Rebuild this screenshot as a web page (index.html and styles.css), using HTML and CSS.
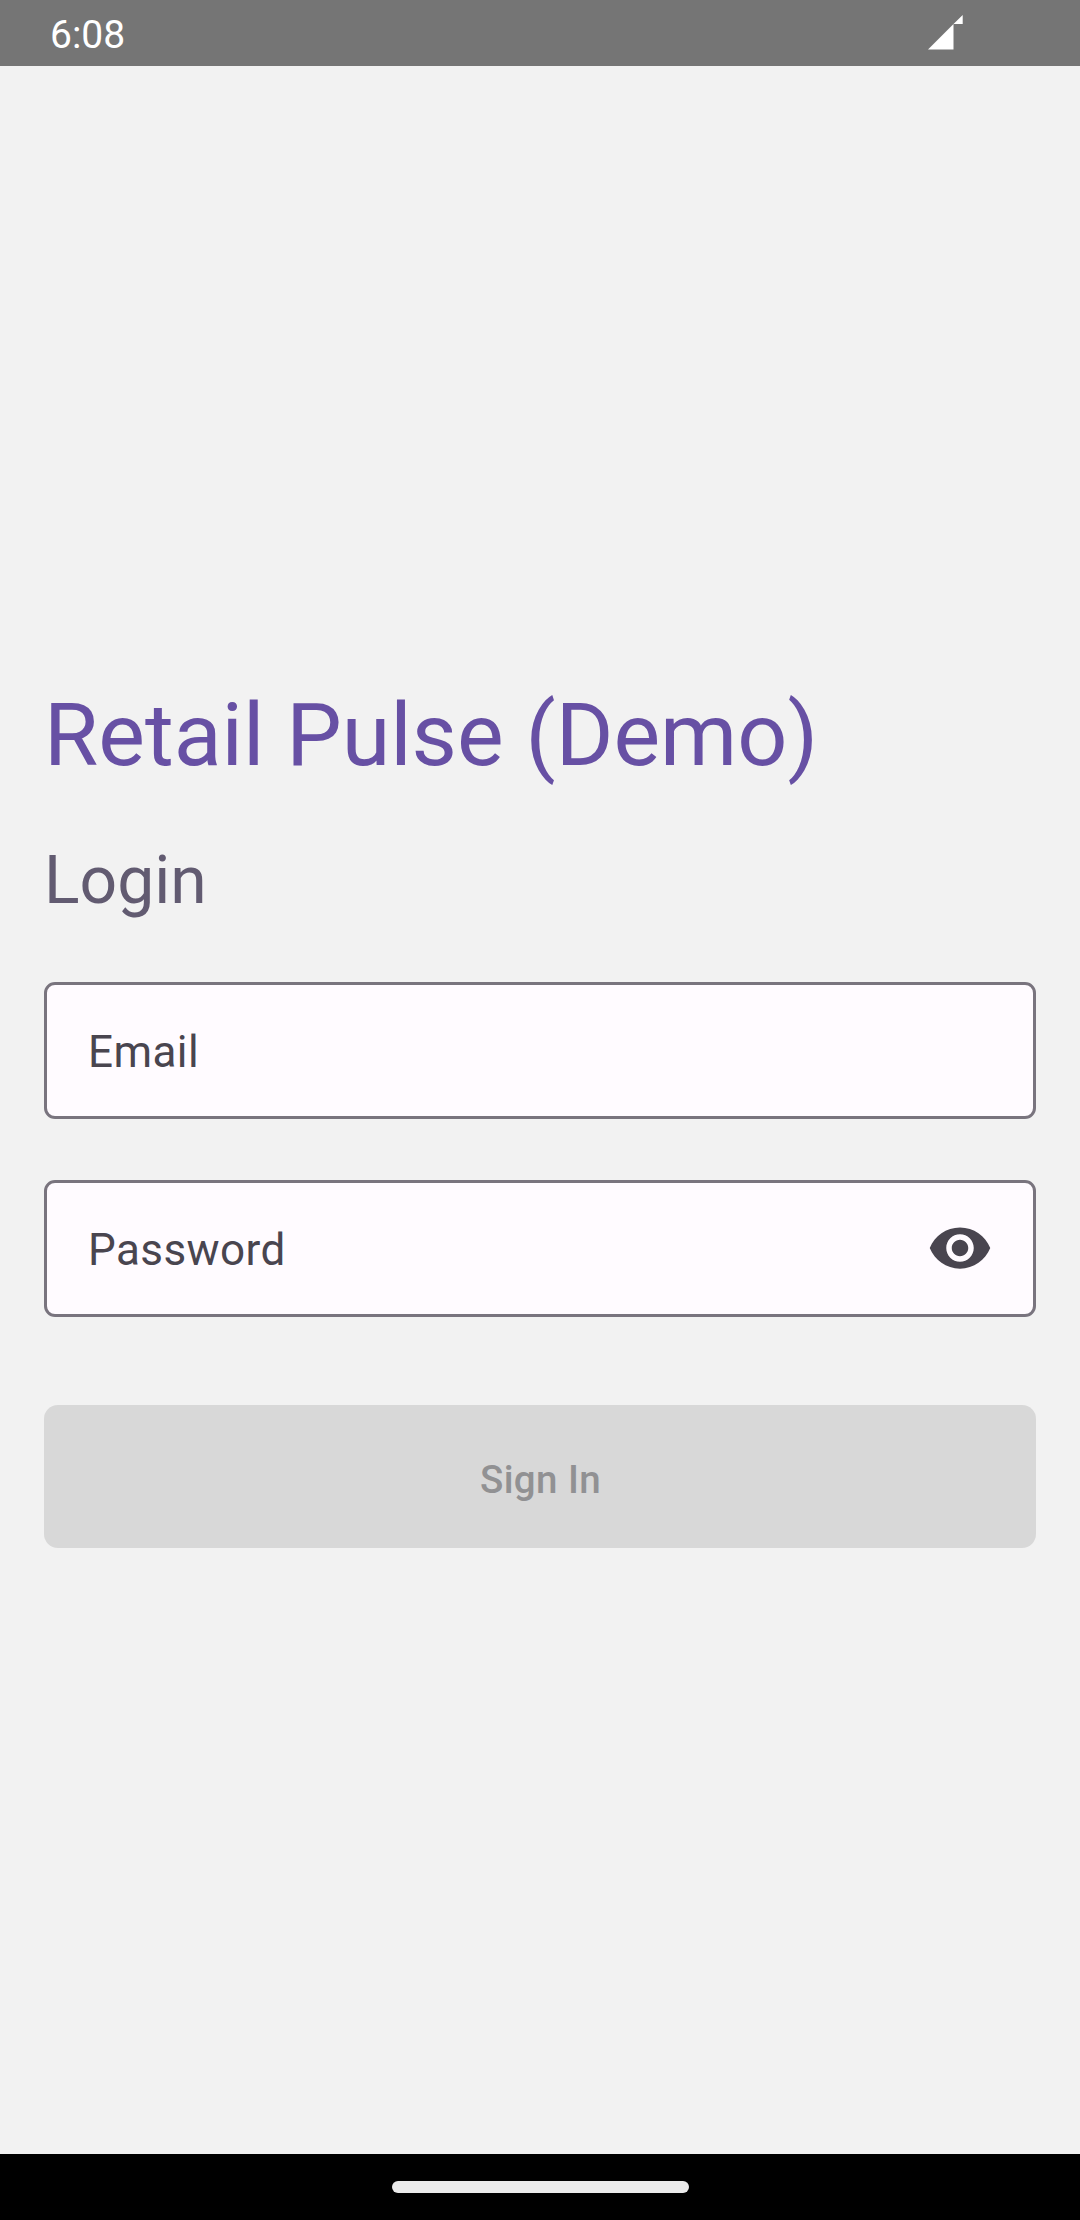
FILE: index.html
```html
<!DOCTYPE html>
<html lang="en">
<head>
<meta charset="utf-8">
<title>Retail Pulse</title>
<link rel="stylesheet" href="styles.css">
</head>
<body>
<div class="screen">
  <header class="status-bar">
    <span class="clock">6:08</span>
    <svg class="signal" viewBox="0 0 35 35" aria-hidden="true"><path d="M0 34.6L25.5 9V34.6zM25.5 9L34.7 0V9z" fill="#fff"/></svg>
  </header>
  <main class="login">
    <h1 class="title">Retail Pulse (Demo)</h1>
    <h2 class="subtitle">Login</h2>
    <form class="form">
      <div class="field"><span class="label">Email</span></div>
      <div class="field">
        <span class="label">Password</span>
        <svg class="eye" viewBox="0 0 24 24" aria-hidden="true"><path fill="#49454f" d="M12 4.5C7 4.5 2.73 7.61 1 12c1.73 4.39 6 7.5 11 7.5s9.27-3.11 11-7.5c-1.73-4.39-6-7.5-11-7.5zM12 17c-2.76 0-5-2.24-5-5s2.24-5 5-5 5 2.24 5 5-2.24 5-5 5zm0-8c-1.66 0-3 1.34-3 3s1.34 3 3 3 3-1.34 3-3-1.34-3-3-3z"/></svg>
      </div>
      <button class="submit" type="button" disabled>Sign In</button>
    </form>
  </main>
  <footer class="nav-bar"><div class="pill"></div></footer>
</div>
</body>
</html>
```
FILE: styles.css
```css
* {
  box-sizing: border-box;
}

body {
  margin: 0;
  font-family: Roboto, sans-serif;
  background: #f2f2f2;
}

.screen {
  display: flex;
  flex-direction: column;
  width: 1080px;
  height: 2220px;
}

.status-bar {
  display: flex;
  justify-content: space-between;
  align-items: flex-start;
  height: 66px;
  padding: 0 117.5px 0 50px;
  background: #757575;
  color: #fff;
}

.clock {
  padding-top: 12px;
  font-size: 39px;
  line-height: 46px;
}

.signal {
  width: 35px;
  height: 35px;
  margin-top: 15px;
}

.login {
  flex: 1;
  padding: 614px 44px 0;
}

.title,
.subtitle {
  margin: 0;
  font-weight: 400;
}

.title {
  font-size: 88px;
  line-height: 110px;
  color: #6750a4;
}

.subtitle {
  margin-top: 47px;
  font-size: 66px;
  line-height: 88px;
  color: #625b71;
}

.form {
  display: flex;
  flex-direction: column;
  margin-top: 57px;
}

.field {
  display: flex;
  align-items: center;
  justify-content: space-between;
  height: 137px;
  margin-bottom: 61px;
  padding: 0 41px;
  border: 3px solid #79747e;
  border-radius: 11px;
  background: #fffbff;
}

.label {
  padding-top: 2px;
  font-size: 44px;
  line-height: 66px;
  letter-spacing: 0.4125px;
  color: #49454f;
}

.eye {
  width: 66px;
  height: 66px;
  margin: 0 -1px 1px 0;
}

.submit {
  height: 143px;
  margin-top: 27px;
  padding: 6px 0 0 1px;
  border: 0;
  border-radius: 14px;
  background: #d8d8d8;
  color: #919193;
  font: 500 38.5px/55px Roboto, sans-serif;
  letter-spacing: 0.4125px;
}

.nav-bar {
  display: flex;
  justify-content: center;
  height: 66px;
  padding-top: 27px;
  background: #000;
}

.pill {
  width: 297px;
  height: 12px;
  border-radius: 6px;
  background: #ebebeb;
}
```
